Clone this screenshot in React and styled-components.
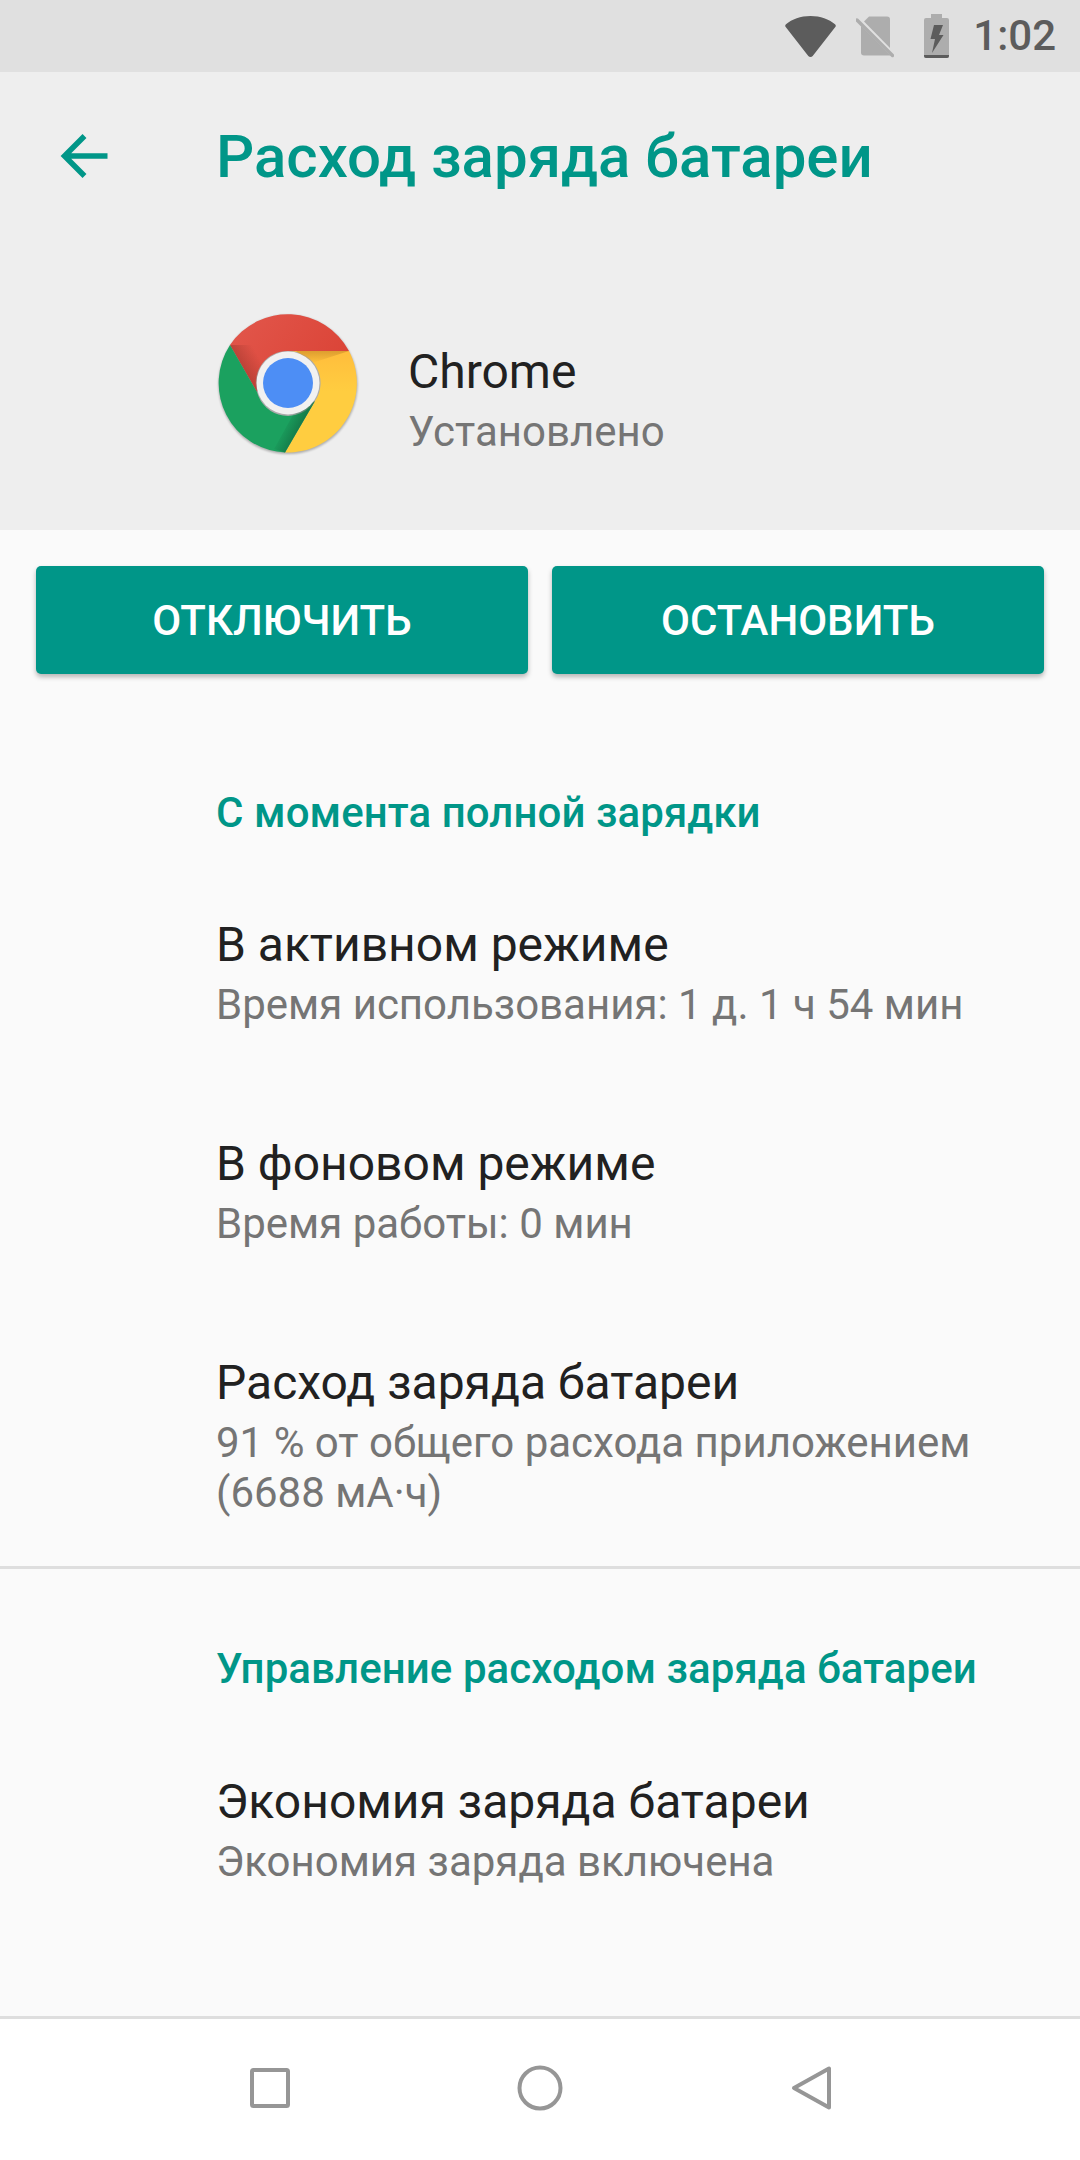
import React from 'react';
import styled, { createGlobalStyle } from 'styled-components';

const GlobalStyle = createGlobalStyle`
  html, body {
    margin: 0;
    padding: 0;
    background: #fafafa;
    font-family: Roboto, "Noto Sans", sans-serif;
  }
`;

const Screen = styled.div`
  width: 1080px;
  height: 2160px;
  display: flex;
  flex-direction: column;
  background: #fafafa;
  overflow: hidden;
`;

const StatusBar = styled.div`
  height: 72px;
  flex: none;
  background: #e0e0e0;
  display: flex;
  align-items: center;
  justify-content: flex-end;
  padding-right: 24px;
  box-sizing: border-box;
`;

const StatusIcon = styled.svg`
  display: block;
  flex: none;
  margin-right: ${(props) => props.$gap}px;
`;

const Clock = styled.span`
  font-size: 42px;
  font-weight: 500;
  color: #5c5c5c;
  line-height: 72px;
`;

const Header = styled.div`
  height: 458px;
  flex: none;
  background: #eeeeee;
  display: flex;
  flex-direction: column;
`;

const Toolbar = styled.div`
  height: 168px;
  display: flex;
  align-items: center;
  padding-left: 60px;
  box-sizing: border-box;
`;

const BackIcon = styled.svg`
  display: block;
  flex: none;
  margin-right: 108px;
`;

const PageTitle = styled.h1`
  margin: 0;
  font-size: 60px;
  font-weight: 500;
  color: #009688;
`;

const AppInfo = styled.div`
  display: flex;
  align-items: center;
  padding-left: 215px;
  margin-top: 65px;
`;

const AppIcon = styled.svg`
  display: block;
  flex: none;
  margin-right: 47px;
`;

const AppText = styled.div`
  padding-top: 36px;
`;

const AppName = styled.div`
  font-size: 48px;
  line-height: 62px;
  color: #212121;
`;

const AppState = styled.div`
  font-size: 42px;
  line-height: 58px;
  color: #757575;
`;

const Buttons = styled.div`
  display: grid;
  grid-template-columns: 492px 492px;
  column-gap: 24px;
  padding: 36px 36px 0;
`;

const ActionButton = styled.button`
  height: 108px;
  border: 0;
  border-radius: 5px;
  background: #009688;
  color: #ffffff;
  font-family: inherit;
  font-size: 42px;
  font-weight: 500;
  box-shadow: 0 3px 5px rgba(0, 0, 0, 0.28);
  padding: 0;
`;

const SectionTitle = styled.div`
  padding-left: 216px;
  font-size: 42px;
  font-weight: 500;
  line-height: 50px;
  letter-spacing: 0.08px;
  color: #009688;
  margin-top: ${(props) => props.$top}px;
`;

const Row = styled.div`
  padding-left: 216px;
  padding-right: 90px;
  margin-top: ${(props) => props.$top}px;
`;

const RowTitle = styled.div`
  font-size: 48px;
  line-height: 62px;
  color: #212121;
`;

const RowText = styled.div`
  font-size: 42px;
  line-height: 50px;
  color: #757575;
  margin-top: 4px;
`;

const Divider = styled.div`
  height: 3px;
  background: #dedede;
  margin-top: 48px;
  flex: none;
`;

const NavBar = styled.div`
  margin-top: auto;
  height: 144px;
  flex: none;
  box-sizing: border-box;
  border-top: 3px solid #dedede;
  background: #ffffff;
  display: flex;
  justify-content: center;
  align-items: center;
  padding-bottom: 3px;
  gap: 216px;
`;

const NavIcon = styled.svg`
  display: block;
  width: 54px;
  height: 54px;
  flex: none;
`;

function ChromeIcon() {
  return (
    <AppIcon width="146" height="146" viewBox="-73 -73 146 146">
      <defs>
        <linearGradient id="redShade" x1="0" y1="0" x2="1" y2="0.5">
          <stop offset="0" stopColor="#e2574c" />
          <stop offset="1" stopColor="#db4437" />
        </linearGradient>
        <linearGradient id="redEdge" gradientUnits="userSpaceOnUse" x1="-45" y1="-14" x2="-28" y2="-24">
          <stop offset="0" stopColor="#a83a30" stopOpacity="0.65" />
          <stop offset="1" stopColor="#a83a30" stopOpacity="0" />
        </linearGradient>
        <linearGradient id="yellowShade" x1="0" y1="0" x2="0" y2="1">
          <stop offset="0" stopColor="#ffbd3c" />
          <stop offset="0.4" stopColor="#ffcd40" />
        </linearGradient>
        <linearGradient id="yellowEdge" gradientUnits="userSpaceOnUse" x1="30" y1="-32" x2="30" y2="-20">
          <stop offset="0" stopColor="#d99a2e" stopOpacity="0.9" />
          <stop offset="1" stopColor="#d99a2e" stopOpacity="0" />
        </linearGradient>
        <linearGradient id="greenEdge" gradientUnits="userSpaceOnUse" x1="14" y1="44" x2="-2" y2="36">
          <stop offset="0" stopColor="#126b40" stopOpacity="0.75" />
          <stop offset="1" stopColor="#126b40" stopOpacity="0" />
        </linearGradient>
        <filter id="iconShadow" x="-10%" y="-10%" width="120%" height="120%">
          <feGaussianBlur stdDeviation="1.2" />
        </filter>
      </defs>
      <circle cx="0" cy="1.5" r="69.5" fill="#000" opacity="0.28" filter="url(#iconShadow)" />
      <path d="M-58 -38 A69.5 69.5 0 0 1 61 -32 L0 -32 A32 32 0 0 0 -31 9 Z" fill="url(#redShade)" />
      <path d="M-58 -38 L-31 9 L-20 -10 L-34 -38 Z" fill="url(#redEdge)" />
      <path d="M61 -32 A69.5 69.5 0 0 1 -3 69.5 L27 18 A32 32 0 0 0 0 -32 Z" fill="url(#yellowShade)" />
      <path d="M8 -32 L61 -32 L24 -20 Z" fill="url(#yellowEdge)" />
      <path d="M-58 -38 L-31 9 A32 32 0 0 0 27 18 L-3 69.5 A69.5 69.5 0 0 1 -58 -38 Z" fill="#1ba15f" />
      <path d="M27 18 L-3 69.5 L-14 66 L6 30 Z" fill="url(#greenEdge)" />
      <circle cx="0" cy="0" r="31.5" fill="#f1f1f1" />
      <circle cx="0" cy="0" r="25" fill="#4d8ef5" />
    </AppIcon>
  );
}

function App() {
  return (
    <Screen>
      <GlobalStyle />
      <StatusBar>
        <StatusIcon $gap={20} width="51" height="41" viewBox="0 0 51 41">
          <path d="M25.5 0C15.5 0 7 3.2 1 8.2c-1 .8-1 2-.3 2.9l22.6 28.8c1.1 1.4 3.3 1.4 4.4 0l22.6-28.8c.7-.9.7-2.1-.3-2.9C44 3.2 35.500 0 25.500 0z" fill="#5c5c5c" />
        </StatusIcon>
        <StatusIcon $gap={30} width="38" height="43" viewBox="0 0 38 43">
          <path d="M13 1.500H31a3 3 0 0 1 3 3V33L8 6.500z" fill="#adadad" />
          <path d="M5 11L34.500 40.500H8a3 3 0 0 1-3-3z" fill="#adadad" />
          <path d="M1 5L36.500 40.500" stroke="#adadad" strokeWidth="3.400" strokeLinecap="round" />
        </StatusIcon>
        <StatusIcon $gap={24} width="25" height="44" viewBox="0 0 25 44">
          <path d="M7 0h11v4h5a2 2 0 0 1 2 2v36a2 2 0 0 1-2 2H2a2 2 0 0 1-2-2V6a2 2 0 0 1 2-2h5z" fill="#adadad" />
          <path d="M0 41h25v1a2 2 0 0 1-2 2H2a2 2 0 0 1-2-2z" fill="#5c5c5c" />
          <path d="M10 11h9l-4 10h4.500L8 39l3-14H6.500z" fill="#5c5c5c" />
        </StatusIcon>
        <Clock>1:02</Clock>
      </StatusBar>
      <Header>
        <Toolbar>
          <BackIcon width="48" height="48" viewBox="0 0 48 48">
            <path d="M47.500 24H5M24.500 4L4.500 24l20 20" fill="none" stroke="#009688" strokeWidth="5.500" />
          </BackIcon>
          <PageTitle>Расход заряда батареи</PageTitle>
        </Toolbar>
        <AppInfo>
          <ChromeIcon />
          <AppText>
            <AppName>Chrome</AppName>
            <AppState>Установлено</AppState>
          </AppText>
        </AppInfo>
      </Header>
      <Buttons>
        <ActionButton>ОТКЛЮЧИТЬ</ActionButton>
        <ActionButton>ОСТАНОВИТЬ</ActionButton>
      </Buttons>
      <SectionTitle $top={114}>С момента полной зарядки</SectionTitle>
      <Row $top={76}>
        <RowTitle>В активном режиме</RowTitle>
        <RowText>Время использования: 1 д. 1 ч 54 мин</RowText>
      </Row>
      <Row $top={103}>
        <RowTitle>В фоновом режиме</RowTitle>
        <RowText>Время работы: 0 мин</RowText>
      </Row>
      <Row $top={103}>
        <RowTitle>Расход заряда батареи</RowTitle>
        <RowText>91 % от общего расхода приложением (6688 мА·ч)</RowText>
      </Row>
      <Divider />
      <SectionTitle $top={75}>Управление расходом заряда батареи</SectionTitle>
      <Row $top={77}>
        <RowTitle>Экономия заряда батареи</RowTitle>
        <RowText>Экономия заряда включена</RowText>
      </Row>
      <NavBar>
        <NavIcon viewBox="0 0 54 54">
          <rect x="9" y="9" width="36" height="36" rx="1.500" fill="none" stroke="#969696" strokeWidth="4" />
        </NavIcon>
        <NavIcon viewBox="0 0 54 54">
          <circle cx="27" cy="27" r="20.500" fill="none" stroke="#969696" strokeWidth="4" />
        </NavIcon>
        <NavIcon viewBox="0 0 54 54">
          <path d="M46 7.500V46.500L11 27z" fill="none" stroke="#969696" strokeWidth="4" strokeLinejoin="round" />
        </NavIcon>
      </NavBar>
    </Screen>
  );
}

export default App;
